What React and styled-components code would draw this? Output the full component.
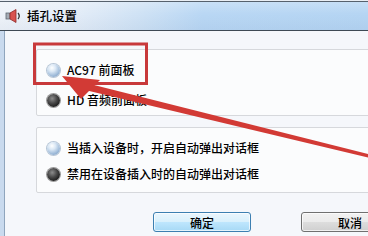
import React from "react";
import styled, { createGlobalStyle } from "styled-components";

const Global = createGlobalStyle`
  html, body {
    margin: 0;
    padding: 0;
    background: #f4f6fa;
  }
  body {
    font-family: "Noto Sans CJK SC", "Liberation Sans", sans-serif;
  }
`;

const Screen = styled.div`
  position: relative;
  width: 368px;
  height: 236px;
  overflow: hidden;
  display: flex;
  flex-direction: column;
  background: #f4f6fa;
`;

const TitleBar = styled.div`
  height: 29px;
  flex: none;
  display: flex;
  align-items: center;
  gap: 4px;
  padding-left: 5px;
  border-top: 1px solid #e9eef4;
  border-bottom: 1px solid #3e4954;
  box-shadow: inset 0 1px 0 #56616d;
  background:
    linear-gradient(180deg, rgba(255,255,255,0.25) 0%, rgba(255,255,255,0) 45%, rgba(0,40,90,0.04) 100%),
    linear-gradient(90deg, #eef3f9 0%, #e6eef8 18%, #cfe2f5 38%, #b9d7f4 55%, #b5d5f3 100%);
`;

const Title = styled.span`
  font-size: 12.5px;
  font-weight: 500;
  color: #000;
  line-height: 1;
  padding-top: 1px;
`;

const Frame = styled.div`
  flex: 1;
  display: flex;
`;

const Edge = styled.div`
  width: 4px;
  flex: none;
  background: #c9daee;
  border-right: 1px solid #8fa5bd;
`;

const Content = styled.div`
  flex: 1;
  min-width: 0;
  padding: 18px 0 0 31px;
  display: flex;
  flex-direction: column;
  background: #f5f7fb;
`;

const Group = styled.div`
  width: 380px;
  height: ${({ h }) => h}px;
  box-sizing: border-box;
  border: 1px solid #d6d8dc;
  border-radius: 2px;
  padding: 8px 0 0 10px;
  display: flex;
  flex-direction: column;
  gap: ${({ gap }) => gap}px;
  margin-bottom: ${({ mb }) => mb || 0}px;
  background: #fbfcfd;
`;

const Row = styled.div`
  height: 24px;
  display: flex;
  align-items: center;
  gap: 7px;
`;

const Radio = styled.span`
  width: 13px;
  height: 13px;
  border-radius: 50%;
  flex: none;
  background: ${({ dark }) =>
    dark
      ? "radial-gradient(circle at 40% 35%, #8c8c8c 0%, #4a4a4a 40%, #1c1c1c 75%, #0a0a0a 100%)"
      : "radial-gradient(circle at 38% 30%, #ffffff 0%, #dbe8f5 30%, #9fbbd9 65%, #6d8fb8 100%)"};
  box-shadow: 0 0 0 1px ${({ dark }) => (dark ? "#9a9a9a" : "#b7c6d6")};
`;

const Label = styled.span`
  font-size: 12px;
  font-weight: 500;
  color: #000;
  line-height: 1;
  white-space: nowrap;
`;

const Buttons = styled.div`
  display: flex;
  gap: 50px;
  padding: 19px 0 0 117px;
`;

const Button = styled.div`
  width: 98px;
  height: 20px;
  flex: none;
  box-sizing: border-box;
  border-radius: 3px;
  display: flex;
  align-items: center;
  justify-content: center;
  font-size: 12px;
  font-weight: 500;
  color: #000;
  border: 1px solid ${({ primary }) => (primary ? "#3c7fb1" : "#707070")};
  background: ${({ primary }) =>
    primary
      ? "linear-gradient(180deg, #eaf6fd 0%, #d9f0fc 48%, #bee6fd 52%, #a7d9f5 100%)"
      : "linear-gradient(180deg, #f2f2f2 0%, #ebebeb 48%, #dddddd 52%, #cfcfcf 100%)"};
  box-shadow: inset 0 0 0 1px rgba(255, 255, 255, 0.7);
`;

const Annotation = styled.svg`
  position: absolute;
  left: 0;
  top: 0;
  pointer-events: none;
`;

const Speaker = () => (
  <svg width="18" height="16" viewBox="0 0 18 16">
    <rect x="1" y="5" width="4" height="6" fill="#a4acb5" stroke="#5d6670" strokeWidth="0.8" />
    <path d="M5 5 L11 1.5 L11 14.5 L5 11 Z" fill="#d9534f" stroke="#8e2b28" strokeWidth="0.8" />
    <path d="M13 5 Q15.5 8 13 11" fill="none" stroke="#333" strokeWidth="1.3" />
  </svg>
);

export default function App() {
  return (
    <>
      <Global />
      <Screen>
        <TitleBar>
          <Speaker />
          <Title>插孔设置</Title>
        </TitleBar>
        <Frame>
          <Edge />
          <Content>
            <Group h={67} gap={6} mb={11}>
              <Row>
                <Radio />
                <Label>AC97 前面板</Label>
              </Row>
              <Row>
                <Radio dark />
                <Label>HD 音频前面板</Label>
              </Row>
            </Group>
            <Group h={66} gap={2}>
              <Row>
                <Radio />
                <Label>当插入设备时，开启自动弹出对话框</Label>
              </Row>
              <Row>
                <Radio dark />
                <Label>禁用在设备插入时的自动弹出对话框</Label>
              </Row>
            </Group>
            <Buttons>
              <Button primary>确定</Button>
              <Button>取消</Button>
            </Buttons>
          </Content>
        </Frame>
        <Annotation width="368" height="236" viewBox="0 0 368 236">
          <rect x="34.5" y="44" width="112" height="39.5" fill="none" stroke="#c8393b" strokeWidth="3" />
          <polygon points="86,83 372,155 372,158.5 85,90" fill="#d23a35" />
          <polygon points="62,76 100,80 81,99" fill="#d23a35" />
        </Annotation>
      </Screen>
    </>
  );
}
